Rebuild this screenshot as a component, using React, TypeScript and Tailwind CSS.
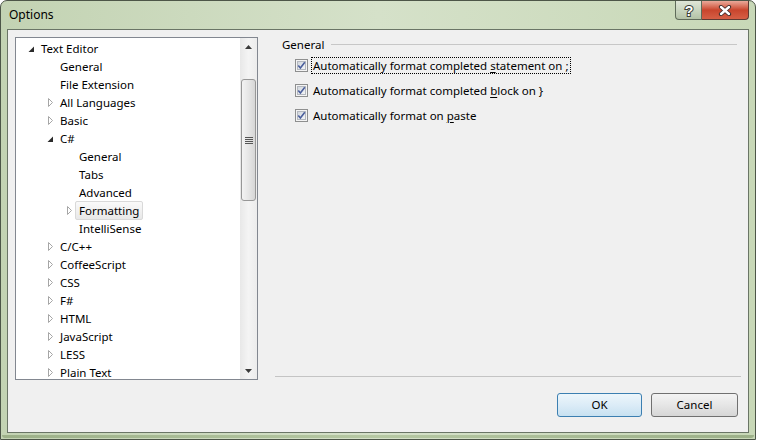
import React from 'react';
import clsx from 'clsx';

type Node = {
    label: string;
    level: 0 | 1 | 2;
    state?: 'open' | 'closed';
    selected?: boolean;
};

const nodes: Node[] = [
    { label: 'Text Editor', level: 0, state: 'open' },
    { label: 'General', level: 1 },
    { label: 'File Extension', level: 1 },
    { label: 'All Languages', level: 1, state: 'closed' },
    { label: 'Basic', level: 1, state: 'closed' },
    { label: 'C#', level: 1, state: 'open' },
    { label: 'General', level: 2 },
    { label: 'Tabs', level: 2 },
    { label: 'Advanced', level: 2 },
    { label: 'Formatting', level: 2, state: 'closed', selected: true },
    { label: 'IntelliSense', level: 2 },
    { label: 'C/C++', level: 1, state: 'closed' },
    { label: 'CoffeeScript', level: 1, state: 'closed' },
    { label: 'CSS', level: 1, state: 'closed' },
    { label: 'F#', level: 1, state: 'closed' },
    { label: 'HTML', level: 1, state: 'closed' },
    { label: 'JavaScript', level: 1, state: 'closed' },
    { label: 'LESS', level: 1, state: 'closed' },
    { label: 'Plain Text', level: 1, state: 'closed' },
];

const indent = ['pl-[12px]', 'pl-[31px]', 'pl-[50px]'];

const Expander = ({ state }: { state?: 'open' | 'closed' }) => {
    if (state === 'open') {
        return (
            <svg width="7" height="7" className="mt-[3px]">
                <polygon points="6,0.5 6,6 0.5,6" fill="#2b2b2b" />
            </svg>
        );
    }
    if (state === 'closed') {
        return (
            <svg width="7" height="10" className="ml-[1px] mt-[2px]">
                <polygon points="0.5,0.5 4.5,4.5 0.5,8.5" fill="white" stroke="#a6a6a6" />
            </svg>
        );
    }
    return null;
};

const TreeRow = ({ node }: { node: Node }) => (
    <div className={clsx('flex h-[18px] items-center', indent[node.level])}>
        <span className="flex w-[9px] shrink-0">
            <Expander state={node.state} />
        </span>
        <span
            className={clsx(
                'h-[19px] rounded-[2px] border px-[3px] leading-[17px] whitespace-nowrap',
                node.selected
                    ? 'border-[#d9d9d9] bg-gradient-to-b from-[#fafafa] to-[#e8e8e8]'
                    : 'border-transparent'
            )}
        >
            {node.label}
        </span>
    </div>
);

const ScrollBar = () => (
    <div className="flex w-[17px] shrink-0 flex-col bg-gradient-to-r from-[#e8e8e8] via-[#f4f4f4] to-[#ececec]">
        <div className="flex h-[17px] items-center justify-center">
            <svg width="7" height="4">
                <polygon points="3.5,0 7,4 0,4" fill="#3a3a3a" />
            </svg>
        </div>
        <div className="mx-[1px] mt-[24px] flex h-[122px] items-center justify-center rounded-[3px] border border-[#979797] bg-gradient-to-r from-[#f3f3f3] via-[#e6e6e6] to-[#d6d6d6]">
            <div className="flex flex-col gap-[1px]">
                <div className="h-[1px] w-[8px] bg-[#555]" />
                <div className="h-[1px] w-[8px] bg-[#555]" />
                <div className="h-[1px] w-[8px] bg-[#555]" />
                <div className="h-[1px] w-[8px] bg-[#555]" />
            </div>
        </div>
        <div className="flex-1" />
        <div className="flex h-[17px] items-center justify-center">
            <svg width="7" height="4">
                <polygon points="0,0 7,0 3.5,4" fill="#3a3a3a" />
            </svg>
        </div>
    </div>
);

const CheckBox = () => (
    <svg width="13" height="13" className="shrink-0">
        <defs>
            <linearGradient id="cbfill" x1="0" y1="0" x2="1" y2="1">
                <stop offset="0" stopColor="#cfd5dc" />
                <stop offset="1" stopColor="#f6f7f8" />
            </linearGradient>
        </defs>
        <rect x="0.5" y="0.5" width="12" height="12" fill="#f4f4f4" stroke="#8e8f8f" />
        <rect x="2.5" y="2.5" width="8" height="8" fill="url(#cbfill)" stroke="#b4b8bf" />
        <path d="M3.3 6.4 L5.4 8.9 L9.8 3.2" fill="none" stroke="#4a5e9c" strokeWidth="1.6" />
    </svg>
);

const Option = ({ before, hot, after, focused }: { before: string; hot: string; after: string; focused?: boolean }) => (
    <div className="flex h-[25px] items-center pl-[20px]">
        <CheckBox />
        <span
            className={clsx(
                'ml-[3px] border px-[1px] leading-[15px] whitespace-nowrap',
                focused ? 'border-dotted border-black' : 'border-transparent'
            )}
        >
            {before}
            <span className="underline underline-offset-2">{hot}</span>
            {after}
        </span>
    </div>
);

const DialogButton = ({ label, primary }: { label: string; primary?: boolean }) => (
    <button
        className={clsx(
            'h-[24px] rounded-[3px] border',
            primary
                ? 'w-[85px] border-[#3c7fb1] bg-gradient-to-b from-[#edf6fb] via-[#dcecf7] to-[#c7e1f1]'
                : 'w-[87px] border-[#707070] bg-gradient-to-b from-[#f3f3f3] via-[#e6e6e6] to-[#d6d6d6]'
        )}
    >
        {label}
    </button>
);

const App = () => {
    return (
        <div className="h-[440px] w-[757px] overflow-hidden bg-white font-['Noto_Sans','Segoe_UI',sans-serif] text-[11.5px] text-black">
            <div className="flex h-[440px] w-[756px] flex-col rounded-t-[7px] border border-[#4d5648] bg-gradient-to-r from-[#c3d3b3] via-[#d5e1c9] to-[#c8d8b7]">
                <div className="flex h-[28px] shrink-0 items-start justify-between">
                    <span className="mt-[5px] ml-[8px] text-[12px]">Options</span>
                    <div className="mr-[6px] flex">
                        <div className="flex h-[19px] w-[27px] items-center justify-center rounded-bl-[4px] border border-t-0 border-[#5f6b5a] bg-gradient-to-b from-[#dfe6d8] via-[#c9d5bf] to-[#b3c2a6]">
                            <svg width="12" height="15">
                                <text
                                    x="6"
                                    y="12.5"
                                    textAnchor="middle"
                                    fontFamily="Liberation Sans, sans-serif"
                                    fontWeight="bold"
                                    fontSize="14"
                                    fill="#ffffff"
                                    stroke="#3a3f38"
                                    strokeWidth="2"
                                    paintOrder="stroke"
                                >
                                    ?
                                </text>
                            </svg>
                        </div>
                        <div className="flex h-[19px] w-[47px] items-center justify-center rounded-br-[4px] border border-t-0 border-l-0 border-[#5f3a33] bg-gradient-to-b from-[#e9a99a] via-[#c9452d] to-[#d65f45]">
                            <svg width="14" height="11">
                                <path d="M3 2 L11 9 M11 2 L3 9" stroke="#3b2a28" strokeWidth="4.2" strokeLinecap="round" />
                                <path d="M3 2 L11 9 M11 2 L3 9" stroke="#ffffff" strokeWidth="2.4" strokeLinecap="round" />
                            </svg>
                        </div>
                    </div>
                </div>

                <div className="mx-[6px] flex flex-col border border-[#6a7566] bg-[#f0f0f0] px-[7px] pt-[7px] pb-[15px]">
                    <div className="flex">
                        <div className="flex h-[343px] w-[243px] shrink-0 border border-[#828790] bg-white">
                            <div className="flex-1 overflow-hidden pt-[1px]">
                                {nodes.map((node, i) => (
                                    <TreeRow key={i} node={node} />
                                ))}
                            </div>
                            <ScrollBar />
                        </div>

                        <div className="ml-[17px] flex h-[340px] flex-1 flex-col border-b border-[#c4c4c4] pr-[4px]">
                            <div className="flex h-[16px] items-center pl-[7px]">
                                <span>General</span>
                                <div className="mt-[-2px] ml-[7px] h-[1px] flex-1 bg-[#c7c7c7]" />
                            </div>
                            <Option before="Automatically format completed " hot="s" after="tatement on ;" focused />
                            <Option before="Automatically format completed " hot="b" after="lock on }" />
                            <Option before="Automatically format on " hot="p" after="aste" />
                        </div>
                    </div>

                    <div className="mt-[13px] flex justify-end gap-[9px] pr-[3px]">
                        <DialogButton label="OK" primary />
                        <DialogButton label="Cancel" />
                    </div>
                </div>

                <div className="mx-[1px] mt-auto mb-[1px] h-[3px] rounded-b-[3px] bg-gradient-to-r from-[#9cb088] via-[#b6c8a3] to-[#9cb088]" />
            </div>
        </div>
    );
};

export default App;
